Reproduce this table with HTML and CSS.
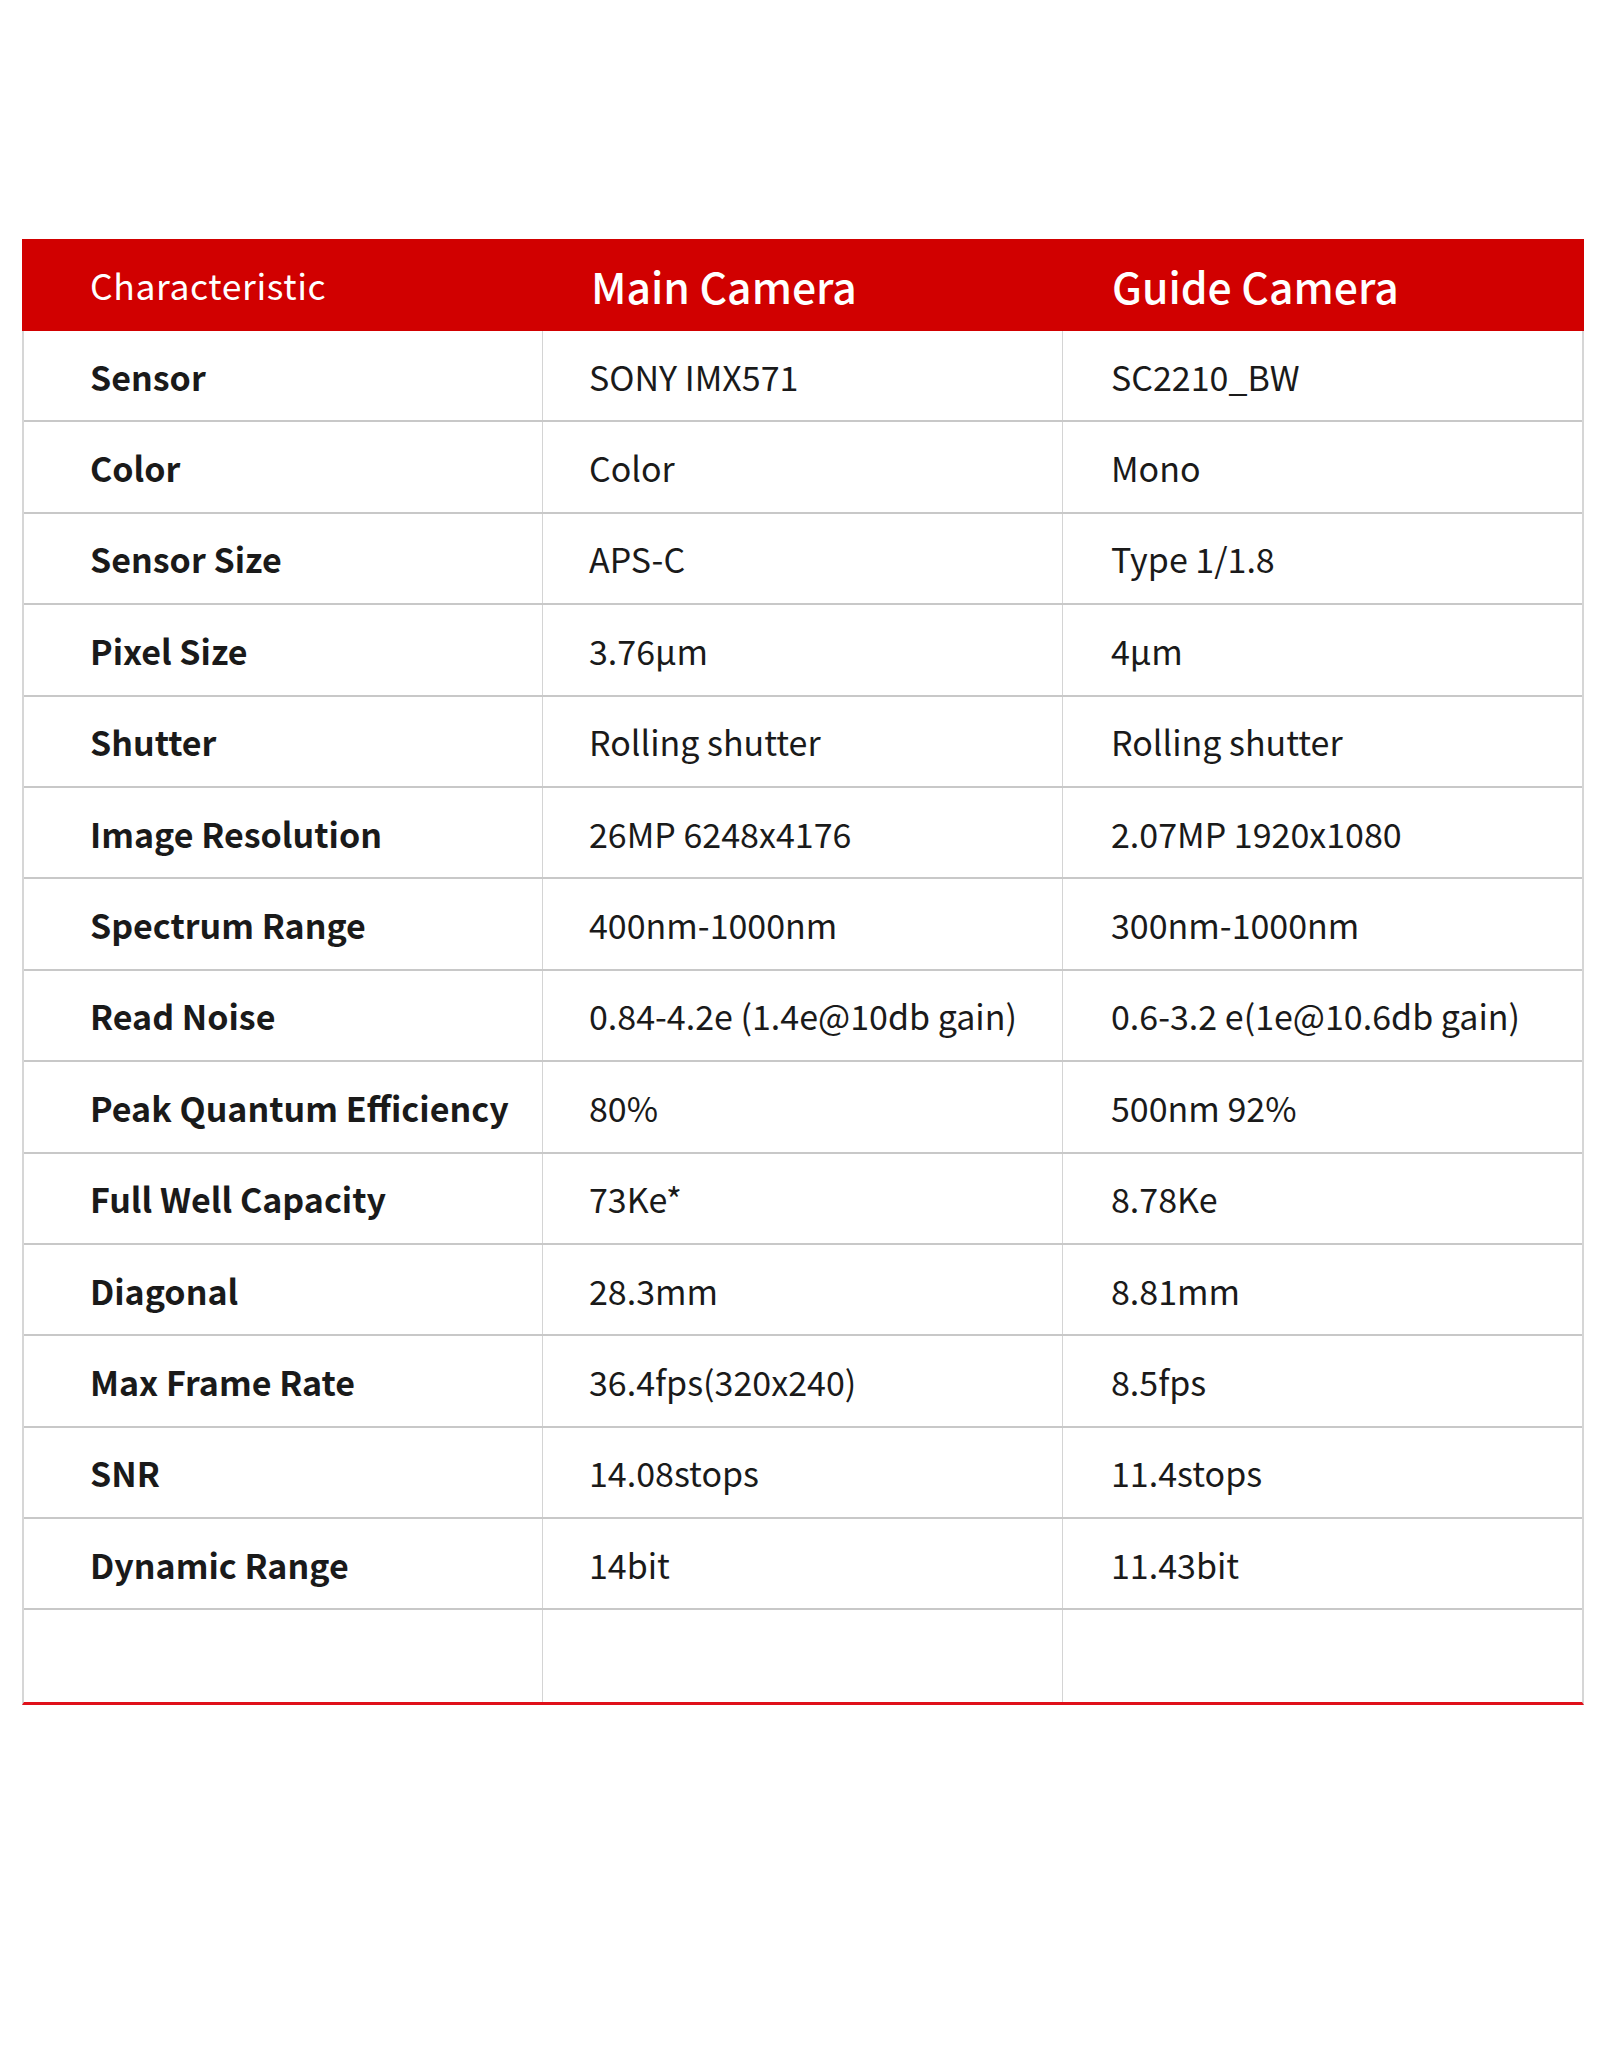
FILE: index.html
```html
<!DOCTYPE html>
<html lang="en">
<head>
<meta charset="utf-8">
<title>Camera Specifications</title>
<link rel="stylesheet" href="styles.css">
</head>
<body>
<div class="spec">
  <div class="row head">
    <div class="cell c1">Characteristic</div>
    <div class="cell c2">Main Camera</div>
    <div class="cell c3">Guide Camera</div>
  </div>
  <div class="row"><div class="cell c1">Sensor</div><div class="cell c2">SONY IMX571</div><div class="cell c3">SC2210_BW</div></div>
  <div class="row"><div class="cell c1">Color</div><div class="cell c2">Color</div><div class="cell c3">Mono</div></div>
  <div class="row"><div class="cell c1">Sensor Size</div><div class="cell c2">APS-C</div><div class="cell c3">Type 1/1.8</div></div>
  <div class="row"><div class="cell c1">Pixel Size</div><div class="cell c2">3.76μm</div><div class="cell c3">4μm</div></div>
  <div class="row"><div class="cell c1">Shutter</div><div class="cell c2">Rolling shutter</div><div class="cell c3">Rolling shutter</div></div>
  <div class="row"><div class="cell c1">Image Resolution</div><div class="cell c2">26MP 6248x4176</div><div class="cell c3">2.07MP 1920x1080</div></div>
  <div class="row"><div class="cell c1">Spectrum Range</div><div class="cell c2">400nm-1000nm</div><div class="cell c3">300nm-1000nm</div></div>
  <div class="row"><div class="cell c1">Read Noise</div><div class="cell c2">0.84-4.2e (1.4e@10db gain)</div><div class="cell c3">0.6-3.2 e(1e@10.6db gain)</div></div>
  <div class="row"><div class="cell c1">Peak Quantum Efficiency</div><div class="cell c2">80%</div><div class="cell c3">500nm 92%</div></div>
  <div class="row"><div class="cell c1">Full Well Capacity</div><div class="cell c2">73Ke*</div><div class="cell c3">8.78Ke</div></div>
  <div class="row"><div class="cell c1">Diagonal</div><div class="cell c2">28.3mm</div><div class="cell c3">8.81mm</div></div>
  <div class="row"><div class="cell c1">Max Frame Rate</div><div class="cell c2">36.4fps(320x240)</div><div class="cell c3">8.5fps</div></div>
  <div class="row"><div class="cell c1">SNR</div><div class="cell c2">14.08stops</div><div class="cell c3">11.4stops</div></div>
  <div class="row"><div class="cell c1">Dynamic Range</div><div class="cell c2">14bit</div><div class="cell c3">11.43bit</div></div>
  <div class="row last"><div class="cell c1"></div><div class="cell c2"></div><div class="cell c3"></div></div>
</div>
</body>
</html>
```
FILE: styles.css
```css
html, body {
  margin: 0;
  padding: 0;
  background: #ffffff;
}
body {
  font-family: "Noto Sans CJK SC", "Noto Sans", sans-serif;
  color: #1a1a1a;
}
.spec {
  margin: 239px 0 0 22px;
  width: 1562px;
  border-left: 2px solid #d6d6d6;
  border-right: 2px solid #d6d6d6;
  border-bottom: 3px solid #e0101a;
  box-sizing: border-box;
}
.row {
  display: grid;
  grid-template-columns: 518px 520px 1fr;
  height: 91.4px;
  box-sizing: border-box;
  border-bottom: 2px solid #c8c8c8;
}
.row.last {
  border-bottom: none;
}
.cell {
  display: flex;
  align-items: center;
  font-size: 34px;
  line-height: 1;
  padding-top: 2px;
}
.c1 {
  padding-left: 66px;
  font-weight: 700;
}
.c2 {
  padding-left: 46px;
  border-left: 1px solid #d4d4d4;
}
.c3 {
  padding-left: 48px;
  border-left: 1px solid #d4d4d4;
}
.head {
  height: 92px;
  background: #d10000;
  border-bottom: none;
  color: #ffffff;
  margin: 0 -2px;
}
.head .cell {
  border-left: none;
  font-weight: 500;
  font-size: 42.7px;
  padding-top: 0;
}
.head .c1 {
  font-size: 35.5px;
  font-weight: 400;
  letter-spacing: 0.6px;
  padding-left: 68px;
}
.head .c2 {
  padding-left: 51px;
}
.head .c3 {
  padding-left: 52px;
}
```
